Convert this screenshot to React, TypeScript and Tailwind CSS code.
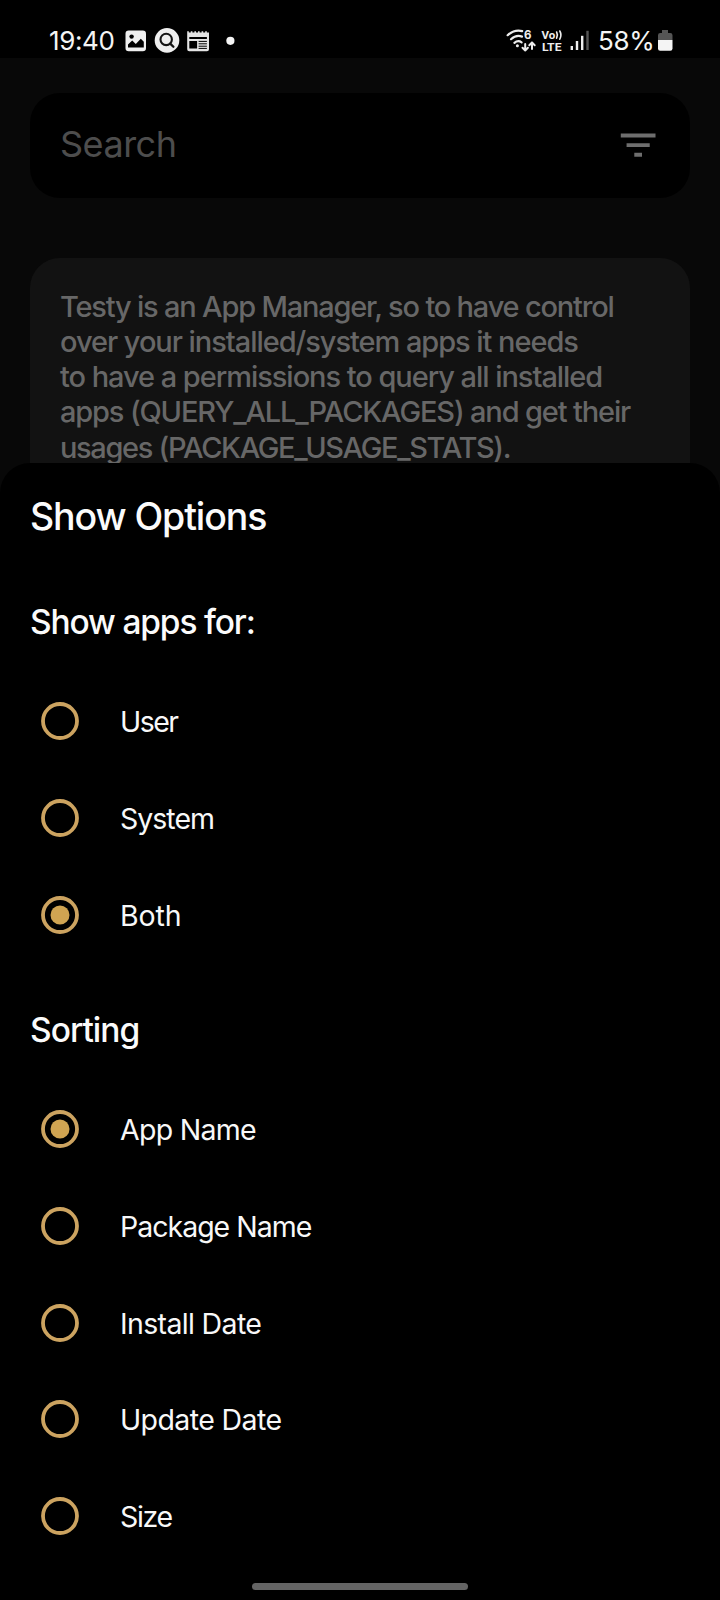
import clsx from "clsx";

type Option = {
  label: string;
  tracking: string;
  checked?: boolean;
};

const showOptions: Option[] = [
  { label: "User", tracking: "tracking-[-1.5px]" },
  { label: "System", tracking: "tracking-[-1px]" },
  { label: "Both", tracking: "tracking-[-0.1px]", checked: true },
];

const sortOptions: Option[] = [
  { label: "App Name", tracking: "tracking-[-0.7px]", checked: true },
  { label: "Package Name", tracking: "tracking-[-1px]" },
  { label: "Install Date", tracking: "tracking-[-0.65px]" },
  { label: "Update Date", tracking: "tracking-[-0.6px]" },
  { label: "Size", tracking: "tracking-[-1.3px]" },
];

const infoLines = [
  { text: "Testy is an App Manager, so to have control", tracking: "tracking-[-1.2px]" },
  { text: "over your installed/system apps it needs", tracking: "tracking-[-1.05px]" },
  { text: "to have a permissions to query all installed", tracking: "tracking-[-1.05px]" },
  { text: "apps (QUERY_ALL_PACKAGES) and get their", tracking: "tracking-[-1.15px]" },
  { text: "usages (PACKAGE_USAGE_STATS).", tracking: "tracking-[-1.35px]" },
];

function NotificationIcons() {
  return (
    <svg width="112" height="28" viewBox="124 27 112 28" fill="none" aria-hidden="true">
      {/* gallery */}
      <rect x="125.5" y="30.5" width="20.5" height="20.8" rx="3.2" fill="#efefef" />
      <circle cx="131.6" cy="36.6" r="2.2" fill="#000" />
      <path d="M128 47.600v-3l4.200-4 3.600 3.400 5-5.300 3 3v5.900z" fill="#000" />
      {/* search */}
      <circle cx="167" cy="40.4" r="12.3" fill="#efefef" />
      <circle cx="166.2" cy="39.4" r="5.7" stroke="#151515" strokeWidth="2.1" />
      <path d="m170.200 43.600 3.200 3.200" stroke="#151515" strokeWidth="2.3" strokeLinecap="round" />
      {/* news */}
      <path
        d="M187.2 31.2h1.6v1.4h2v-1.4h1.6v1.4h2v-1.4h1.6v1.4h2v-1.4h1.6v1.4h2v-1.4h1.6v1.4h2v-1.4h1.6v1.4h2.200v16.600q0 2-2 2h-17.800q-2 0-2-2z"
        fill="#e4e4e4"
      />
      <path d="M189.300 37h17.600v2h-17.600zM189.300 41h7.800v7.600h-7.800z" fill="#000" />
      <path d="M198.600 41.400h8.300M198.600 43.800h8.300M198.600 46.200h8.300M198.600 48.400h8.300" stroke="#000" strokeWidth="1" />
      <circle cx="230.4" cy="40.8" r="4.1" fill="#f4f4f4" />
    </svg>
  );
}

function ConnectivityIcons() {
  return (
    <svg width="86" height="28" viewBox="505 27 86 28" fill="none" aria-hidden="true">
      {/* wifi 6 */}
      <g stroke="#ededed" strokeWidth="2.2" strokeLinecap="round">
        <path d="M507.600 35.200c4.600-4.100 9.800-5.300 14.600-4.100" />
        <path d="M511 39.200c3.400-3.100 7.400-3.900 11-2.600" />
        <path d="M514.400 42.900c2.200-1.900 5-2.100 7.200-.6" />
      </g>
      <circle cx="517.4" cy="45.8" r="1.5" fill="#ededed" />
      <text x="524" y="39.2" fontSize="11.5" fontWeight="700" fill="#ededed" fontFamily="Inter, sans-serif">
        6
      </text>
      <g stroke="#ededed" strokeWidth="2" strokeLinecap="round" strokeLinejoin="round">
        <path d="M525.200 44v6.400m-2.700-2.600 2.700 2.700 2.700-2.700" />
        <path d="M532 49V42.400m-2.700 2.800 2.700-2.800 2.700 2.800" />
      </g>
      {/* VoLTE */}
      <g fill="#ededed" fontWeight="700" fontFamily="Roboto, sans-serif">
        <text x="541.4" y="38.9" fontSize="10.5" textLength="13.8" lengthAdjust="spacingAndGlyphs">
          Vo
        </text>
        <text x="541.9" y="51.2" fontSize="11.5" textLength="19.6" lengthAdjust="spacingAndGlyphs">
          LTE
        </text>
      </g>
      <path
        d="M556.600 32q1.600 3 0 6.200M559.800 31q2.200 4 0 8.200"
        stroke="#ededed"
        strokeWidth="1.6"
        strokeLinecap="round"
      />
      {/* signal */}
      <g fill="#ededed">
        <rect x="570.6" y="46" width="2.4" height="4" />
        <rect x="575.8" y="41" width="2.4" height="9" />
        <rect x="581" y="35.8" width="2.4" height="14.2" />
        <rect x="586.3" y="30.8" width="2.4" height="19.2" fill="#555" />
      </g>
    </svg>
  );
}

function StatusBar() {
  return (
    <header className="flex h-[58px] shrink-0 bg-black pt-[27px] text-[#f4f4f4]">
      <span className="ml-[49px] w-[75px] whitespace-nowrap text-[26px] leading-7 tracking-[-0.4px]">19:40</span>
      <NotificationIcons />
      <div className="ml-auto flex">
        <ConnectivityIcons />
        <span className="ml-[7px] w-[59px] whitespace-nowrap text-[26px] leading-7 tracking-[-0.3px]">58%</span>
      </div>
      <svg width="16" height="28" viewBox="657 27 16 28" className="mr-[47px]" aria-hidden="true">
        <path d="M662 30h6v3h2.300q2.200 0 2.200 2.200V40H658v-4.800q0-2.200 2.200-2.200H662z" fill="#555" />
        <path d="M658 40h14.500v8.600q0 2.200-2.200 2.200h-10.100q-2.200 0-2.200-2.200z" fill="#f4f4f4" />
      </svg>
    </header>
  );
}

function RadioRow({ label, tracking, checked }: Option) {
  return (
    <label className="flex h-[96.67px] items-center pl-[41px]">
      <input type="radio" defaultChecked={checked} className="sr-only" />
      <svg width="38" height="38" viewBox="0 0 38 38" fill="none" className="shrink-0" aria-hidden="true">
        <circle cx="19" cy="19" r="17" stroke="#cca360" strokeWidth="3.8" />
        {checked ? <circle cx="19" cy="19" r="9.5" fill="#d0a452" /> : null}
      </svg>
      <span className={clsx("ml-[41px] pt-[2px] text-[28.5px] leading-9 text-[#f8f8f8]", tracking)}>{label}</span>
    </label>
  );
}

export default function App() {
  return (
    <div className="flex h-[1600px] w-[720px] flex-col overflow-hidden bg-[#080808] font-['Inter','Noto_Sans',sans-serif]">
      <StatusBar />
      <main className="h-[405px] shrink-0 overflow-hidden px-[30px] pt-[35px]">
        <div className="flex h-[105px] items-center justify-between rounded-[30px] bg-black pl-[30px] pr-[29px]">
          <span className="pb-1 text-[36px] leading-[44px] tracking-[-0.5px] text-[#4d4d4d]">Search</span>
          <svg width="46.3" height="46.3" viewBox="0 0 24 24" fill="#6e6e6e" aria-hidden="true">
            <path d="M10 18h4v-2h-4v2zM3 6v2h18V6H3zm3 7h12v-2H6v2z" />
          </svg>
        </div>
        <div className="mt-[60px] h-[260px] rounded-[30px] bg-[#121212] pl-[30px] pt-[30.5px] text-[29px] font-medium leading-[35.3px] text-[#676767]">
          {infoLines.map((line) => (
            <p key={line.text} className={clsx("whitespace-nowrap", line.tracking)}>
              {line.text}
            </p>
          ))}
        </div>
      </main>
      <section className="relative flex-1 rounded-t-[30px] bg-black text-[#fbfbfb]">
        <h1 className="pl-[30px] pt-[31px] text-[37.5px] font-medium leading-[46px] tracking-[-1.1px]">Show Options</h1>
        <h2 className="mt-[62px] pl-[30px] text-[33.5px] font-medium leading-10 tracking-[-1.15px]">Show apps for:</h2>
        <div className="mt-[31px]">
          {showOptions.map((option) => (
            <RadioRow key={option.label} {...option} />
          ))}
        </div>
        <h2 className="mt-[47px] pl-[30px] text-[33.5px] font-medium leading-10 tracking-[-1px]">Sorting</h2>
        <div className="mt-[31px]">
          {sortOptions.map((option) => (
            <RadioRow key={option.label} {...option} />
          ))}
        </div>
        <div className="absolute bottom-[10px] left-[252px] h-[7px] w-[216px] rounded-full bg-[#646464]" />
      </section>
    </div>
  );
}
